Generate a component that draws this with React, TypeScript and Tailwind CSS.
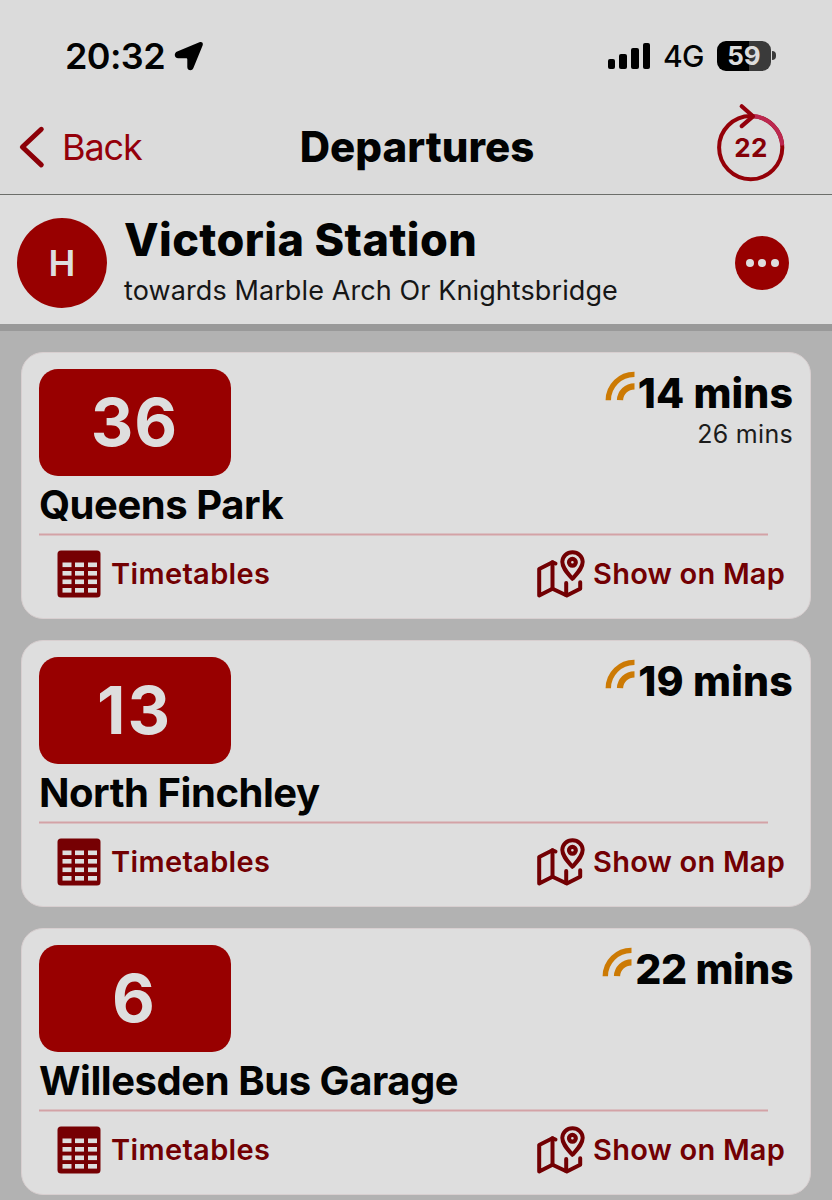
import React from 'react';

interface Departure {
    route: string;
    destination: string;
    due: string;
    next?: string;
    dueClass: string;
    routeClass: string;
}

const departures: Departure[] = [
    {
        route: '36',
        destination: 'Queens Park',
        due: '14 mins',
        next: '26 mins',
        dueClass: 'tracking-[0.1px]',
        routeClass: 'tracking-[1px]',
    },
    {
        route: '13',
        destination: 'North Finchley',
        due: '19 mins',
        dueClass: 'tracking-[0.2px]',
        routeClass: 'tracking-[2px]',
    },
    {
        route: '6',
        destination: 'Willesden Bus Garage',
        due: '22 mins',
        dueClass: 'tracking-[-0.4px]',
        routeClass: 'tracking-[0px] pr-[2px]',
    },
];

const LocationArrow = () => (
    <svg width="30" height="30" viewBox="0 0 30 30" className="ml-[9px] shrink-0">
        <path
            d="M3.2 10.5 25.4 1.3c2.5-1 4.1.7 3.2 3.1L19.4 27c-1.5 3.7-6.1 2.5-6.1-1.1v-7.4c0-.9-.4-1.3-1.3-1.3H4.3c-4.1 0-4.8-5.2-1.1-6.7Z"
            fill="#000"
        />
    </svg>
);

const StatusBar = () => (
    <div className="flex h-[111px] items-center pl-[65px] pr-[56px]">
        <span className="text-[36px] font-semibold leading-none tracking-[-0.6px]">20:32</span>
        <LocationArrow />
        <div className="ml-auto flex items-center">
            <div className="flex h-[26px] items-end gap-[4px]">
                <div className="h-[10px] w-[7px] rounded-[2px] bg-black" />
                <div className="h-[15px] w-[8px] rounded-[2px] bg-black" />
                <div className="h-[21px] w-[8px] rounded-[2px] bg-black" />
                <div className="h-[26px] w-[7px] rounded-[2px] bg-black" />
            </div>
            <span className="ml-[13px] w-[41px] whitespace-nowrap text-[30px] font-medium leading-none tracking-[-0.8px]">4G</span>
            <div className="ml-[13px] flex h-[30px] w-[54px] items-center justify-center overflow-hidden rounded-[9px] bg-[linear-gradient(90deg,#000_0_32px,#3a3a3a_32px)] text-[26px] font-bold leading-none text-[#dcdcdc]">
                59
            </div>
            <div className="ml-[1px] h-[9px] w-[4px] rounded-r-full bg-[#3a3a3a]" />
        </div>
    </div>
);

const RefreshTimer = () => (
    <div className="relative -mt-[10px] mr-[31px] flex h-[80px] w-[68px] items-center justify-center">
        <svg width="68" height="80" viewBox="0 0 68 80" fill="none" className="absolute inset-0">
            <circle cx="33.7" cy="45.6" r="31.6" stroke="#940008" strokeWidth="4" />
            <path d="M36 14.1A31.6 31.6 0 0 1 65.3 43.5" stroke="#bc2850" strokeWidth="4" />
            <path d="M24.7 4.3 36 14.3 24.7 24.1" stroke="#94000c" strokeWidth="4.2" strokeLinecap="round" strokeLinejoin="round" />
        </svg>
        <span className="relative mt-[12px] text-[26px] font-bold leading-none tracking-[0.4px] text-[#850007]">22</span>
    </div>
);

const NavBar = () => (
    <nav className="grid h-[84px] grid-cols-[1fr_auto_1fr] items-center border-b border-[#6c6e6a] pb-[11px] pl-[18px] pr-[16px]">
        <button className="flex items-center text-[#94000a]">
            <svg width="28" height="44" viewBox="0 0 28 44" fill="none" className="mr-[16px]">
                <path d="M23.3 4.3 4.4 22 23.3 39.9" stroke="#8c0008" strokeWidth="5" strokeLinecap="round" strokeLinejoin="round" />
            </svg>
            <span className="text-[36px] leading-none tracking-[-1.1px]">Back</span>
        </button>
        <h1 className="text-[42px] font-extrabold leading-none tracking-[0px]">Departures</h1>
        <div className="flex justify-end">
            <RefreshTimer />
        </div>
    </nav>
);

const StopHeader = () => (
    <header className="flex h-[136px] items-center border-b-[7px] border-[#999] bg-[#dedede] pl-[17px] pr-[43px] pt-[6px]">
        <div className="flex size-[90px] items-center justify-center rounded-full bg-[#980000] text-[36px] font-semibold text-[#dedede]">H</div>
        <div className="ml-[17px] pt-[5px]">
            <h2 className="text-[45px] font-extrabold leading-[50px] tracking-[0.4px]">Victoria Station</h2>
            <p className="text-[27px] leading-[51px] tracking-[0.1px] text-[#161616]">towards Marble Arch Or Knightsbridge</p>
        </div>
        <div className="ml-auto flex size-[54px] items-center justify-center gap-[4.5px] rounded-full bg-[#980000]">
            <span className="size-[8px] rounded-full bg-[#dedede]" />
            <span className="size-[8px] rounded-full bg-[#dedede]" />
            <span className="size-[8px] rounded-full bg-[#dedede]" />
        </div>
    </header>
);

const LiveIcon = () => (
    <svg width="30" height="30" viewBox="0 0 30 30" fill="none" stroke="#cc7a04" className="mb-[14px] mr-[3px]">
        <path d="M3.3 29.2A26 26 0 0 1 29.5 3.4" strokeWidth="5.4" />
        <path d="M15 29.2A14.5 14.5 0 0 1 29.5 15.3" strokeWidth="6.2" />
    </svg>
);

const TableIcon = () => (
    <svg width="44" height="48" viewBox="0 0 44 48" className="mr-[10px]">
        <rect x="0.5" y="0.5" width="43" height="47" rx="3.5" fill="#760003" />
        <g fill="#dedede">
            {[12.5, 21, 29.5, 38].map(y => (
                <React.Fragment key={y}>
                    <rect x="5.5" y={y} width="9" height="4.6" />
                    <rect x="18" y={y} width="9" height="4.6" />
                    <rect x="31" y={y} width="9" height="4.6" />
                </React.Fragment>
            ))}
        </g>
    </svg>
);

const MapIcon = () => (
    <svg width="48" height="49" viewBox="0 0 48 49" fill="none" stroke="#720003" strokeWidth="4" strokeLinejoin="round" strokeLinecap="round" className="mr-[8px]">
        <path d="M18.5 13.5 15.5 12.3 2.2 19v26.5l13.3-6.8L29.8 45.5l13.4-6.8v-6.5" />
        <path d="M15.5 12.3v26.4M29.2 33v12" />
        <path d="M35.4 28.8C30 22.5 25.3 17.8 25.3 11.8A10.1 9.8 0 0 1 35.4 2.3a10.1 9.8 0 0 1 10.3 9.5c0 6-4.8 10.7-10.3 17Z" />
        <circle cx="35.4" cy="12.3" r="3.4" strokeWidth="4.2" />
    </svg>
);

const DepartureCard = ({ departure }: { departure: Departure }) => (
    <article className="h-[267px] shrink-0 rounded-[22px] border border-[#d8cfd0] bg-[#dedede] px-[17px] pt-[16px]">
        <div className="flex justify-between">
            <div className={`-ml-[0.5px] flex h-[107px] w-[192px] items-center justify-center rounded-[19px] bg-[#980000] text-[66px] font-bold text-[#dedede] ${departure.routeClass}`}>
                {departure.route}
            </div>
            <div className="flex flex-col items-end">
                <div className="flex h-[48px] items-center">
                    <LiveIcon />
                    <span className={`text-[41px] font-extrabold leading-[48px] ${departure.dueClass}`}>{departure.due}</span>
                </div>
                {departure.next && <span className="mt-[2px] text-[25px] leading-[30px] tracking-[0.3px] text-[#1c1c1c]">{departure.next}</span>}
            </div>
        </div>
        <h3 className="h-[57px] text-[40px] font-bold leading-[57px] tracking-[-0.45px]">{departure.destination}</h3>
        <div className="mr-[25px] h-[2px] translate-y-[0.5px] bg-[#d3a2a6]" />
        <div className="flex h-[78px] items-center justify-between pl-[18px] pr-[8px] text-[29px] font-semibold text-[#720003]">
            <button className="flex items-center">
                <TableIcon />
                <span className="tracking-[0.35px]">Timetables</span>
            </button>
            <button className="flex items-center">
                <MapIcon />
                <span className="tracking-[0.2px]">Show on Map</span>
            </button>
        </div>
    </article>
);

export default function App() {
    return (
        <div className="flex h-[1200px] w-[832px] flex-col overflow-hidden bg-[#dbdbdb] font-['Inter',sans-serif] text-[#020303]">
            <StatusBar />
            <NavBar />
            <StopHeader />
            <main className="flex flex-1 flex-col gap-[21px] overflow-hidden bg-[#b2b2b2] pl-[21px] pr-[21px] pt-[21px]">
                {departures.map(departure => (
                    <DepartureCard key={departure.route} departure={departure} />
                ))}
            </main>
        </div>
    );
}
